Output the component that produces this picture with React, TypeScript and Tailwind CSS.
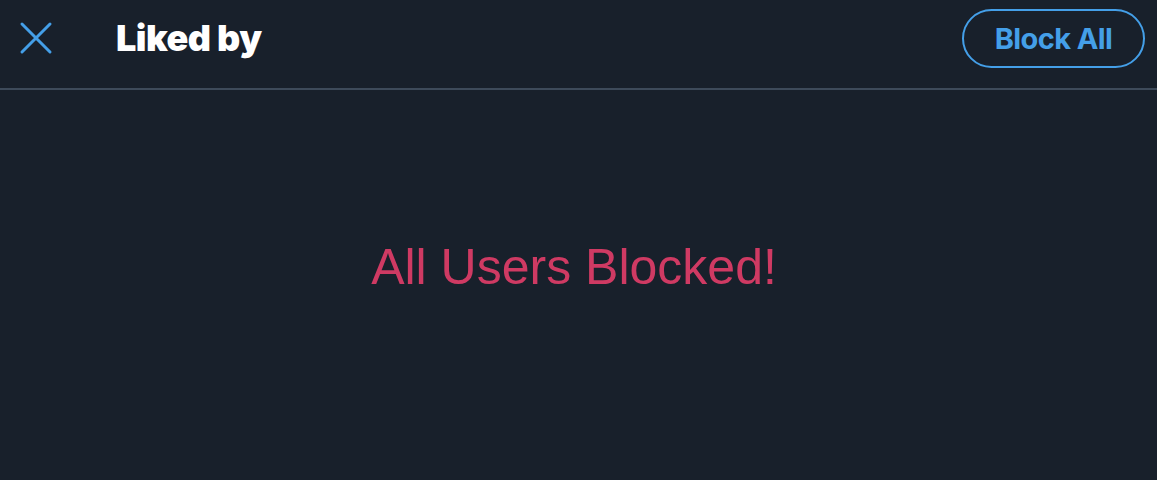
export default function App() {
  return (
    <div className="w-[1157px] h-[480px] bg-[#18202b] flex flex-col font-['Inter',sans-serif] overflow-hidden">
      {/* Header */}
      <div className="h-[90px] flex items-start pt-[9px] border-b-2 border-[#3d4a5a] shrink-0">
        <button className="ml-[18px] mt-[11px] w-[36px] h-[36px] flex items-center justify-center text-[#449fe8]">
          <svg width="36" height="36" viewBox="0 0 36 36" fill="none" stroke="currentColor" strokeWidth="3" strokeLinecap="round">
            <path d="M4 4 L32 32 M32 4 L4 32" />
          </svg>
        </button>
        <h1 className="ml-[62px] mt-[4px] text-[36px] leading-[50px] font-black tracking-[-0.015em] text-white">Liked by</h1>
        <button className="ml-auto mr-[12px] w-[183px] h-[59px] rounded-full border-2 border-[#449fe8] text-[#449fe8] text-[29px] font-bold tracking-[-0.02em]">
          Block All
        </button>
      </div>

      {/* Body */}
      <div className="flex-1 flex items-start justify-center pt-[152px] pr-[9px]">
        <p className="text-[#cf3a63] text-[50px] leading-none font-['Liberation_Sans',sans-serif]">All Users Blocked!</p>
      </div>
    </div>
  );
}
